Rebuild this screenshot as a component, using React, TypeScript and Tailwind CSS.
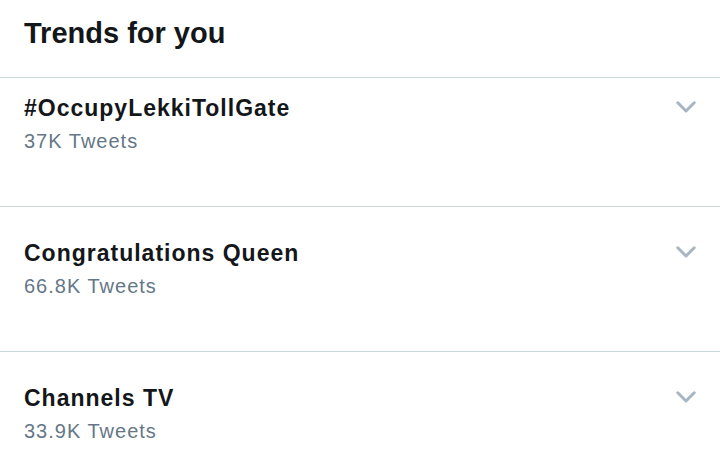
import React from "react";

const trends = [
  { name: "#OccupyLekkiTollGate", count: "37K Tweets", pt: "pt-4" },
  { name: "Congratulations Queen", count: "66.8K Tweets", pt: "pt-8" },
  { name: "Channels TV", count: "33.9K Tweets", pt: "pt-8" },
];

function Chevron() {
  return (
    <svg width="20" height="12" viewBox="0 0 20 12" fill="none">
      <polyline
        points="1.8,1.8 10,10 18.2,1.8"
        stroke="#a7b6c3"
        strokeWidth="3"
        strokeLinecap="round"
        strokeLinejoin="round"
      />
    </svg>
  );
}

export default function App() {
  return (
    <div
      className="w-[720px] h-[467px] overflow-hidden bg-white"
      style={{ fontFamily: "'Liberation Sans', Arial, sans-serif" }}
    >
      <div className="px-6 pt-[15px] pb-[26px] border-b border-[#ccd6dd]">
        <h1 className="text-[29px] leading-[36px] font-bold text-[#14171a]">Trends for you</h1>
      </div>
      {trends.map((t, i) => (
        <div
          key={i}
          className={`flex justify-between items-start px-6 ${t.pt} pb-[51px] ${i < trends.length - 1 ? "border-b border-[#ccd6dd]" : ""}`}
        >
          <div className="flex flex-col">
            <span className="text-[23px] leading-[28px] tracking-[1px] font-bold text-[#14171a]">{t.name}</span>
            <span className="mt-[5px] text-[20px] leading-[28px] tracking-[1px] text-[#657786]">{t.count}</span>
          </div>
          <div className="mt-[7px]">
            <Chevron />
          </div>
        </div>
      ))}
    </div>
  );
}
